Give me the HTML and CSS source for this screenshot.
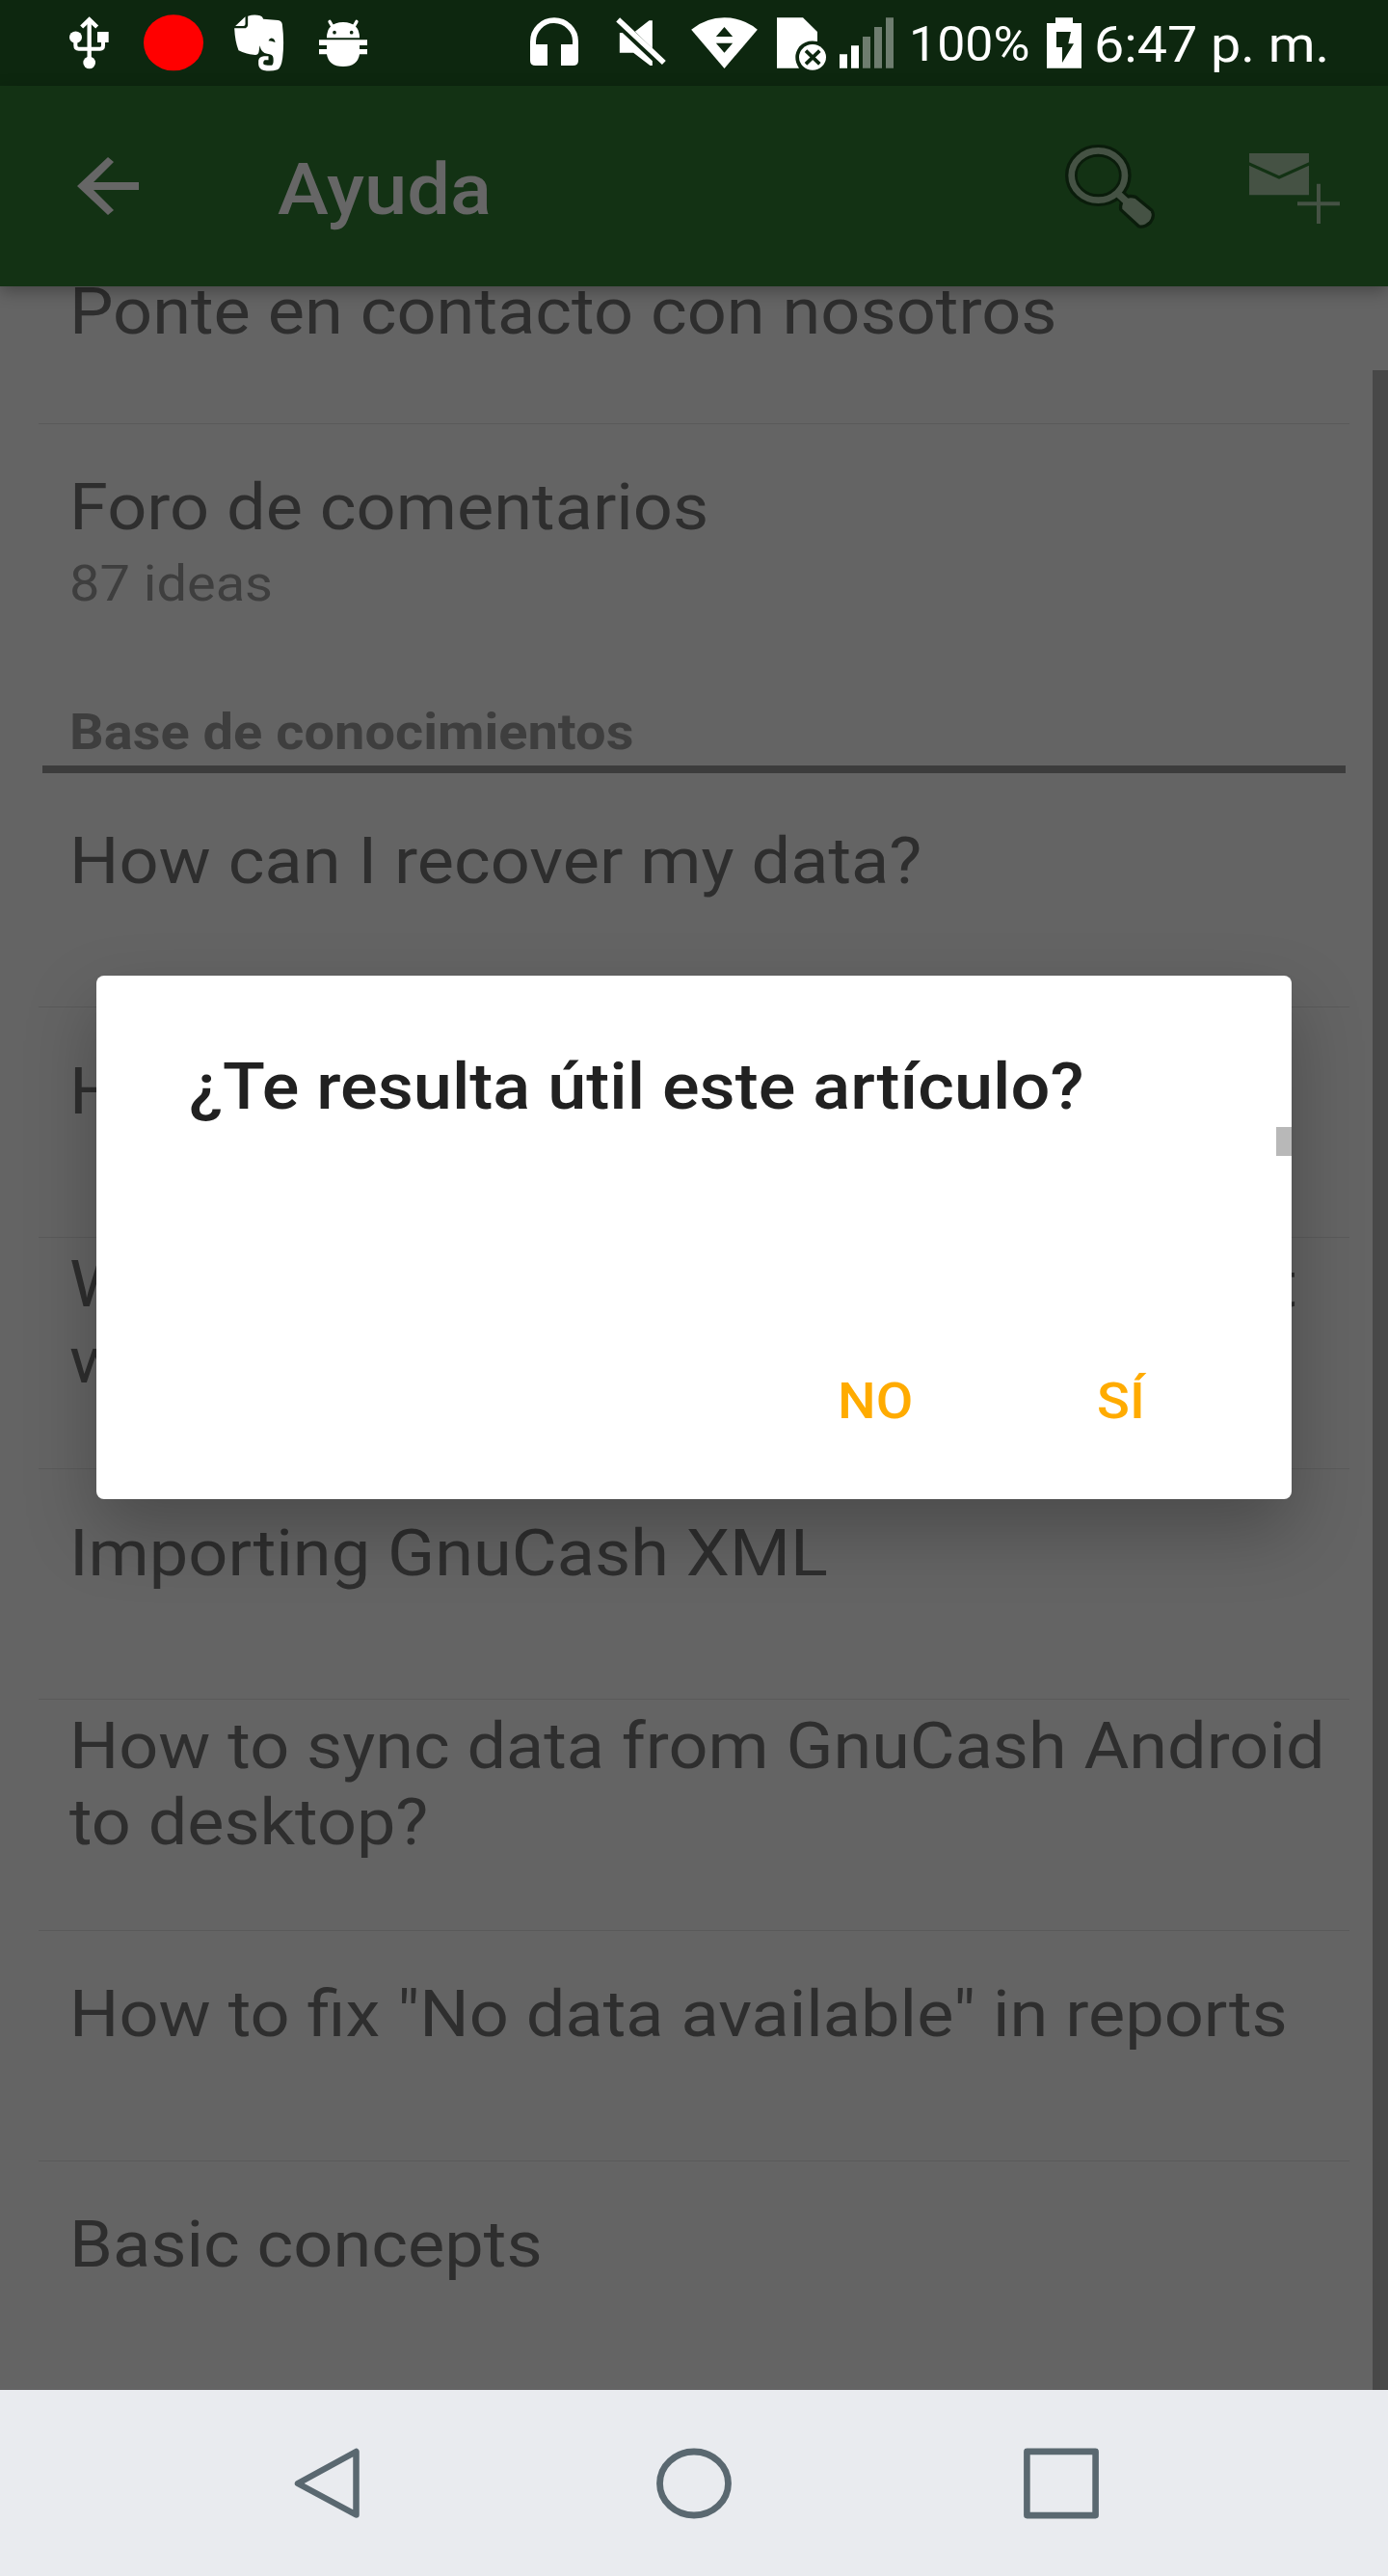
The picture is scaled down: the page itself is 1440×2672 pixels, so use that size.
FILE: index.html
```html
<!DOCTYPE html>
<html lang="es">
<head>
<meta charset="utf-8">
<title>Ayuda</title>
<link rel="stylesheet" href="styles.css">
</head>
<body>
<div class="phone">
  <header class="status">
    <svg class="usb" viewBox="96 0 123 267"><g fill="none" stroke="#fff"><path stroke-width="13" d="M158 65V190"/><path stroke-width="13" d="M134 84L158 61L182 84"/><path stroke-width="12" d="M115 120V142Q115 152 125 152H192Q201 152 201 142V122"/></g><g fill="#fff"><circle cx="158" cy="195" r="19"/><ellipse cx="115.500" cy="116" rx="19.500" ry="18.500"/><path d="M183 99H218V132H183Z"/></g></svg>
    <svg class="record" viewBox="327 0 186 267"><ellipse cx="420" cy="133" rx="93" ry="87" fill="#f00"/></svg>
    <svg class="note" viewBox="605 0 158 267"><path fill="#fff" d="M611 81L642 52V75Q642 81 636 81ZM608 88H638Q650 88 650 76V50Q670 44 688 49Q696 52 698 59L744 63Q756 65 757 76Q764 130 758 180Q754 211 742 217Q722 223 700 219Q684 215 683 200V188Q686 176 700 175H714V187H704Q698 188 698 198Q700 203 712 203H724Q731 200 729 180Q728 168 710 167Q692 166 687 142L684 162Q682 171 673 171Q640 167 621 157Q610 130 608 88Z"/><path fill="#0d270f" d="M714 127Q718 117 726 119Q734 121 735 132Q724 127 714 127Z"/></svg>
    <svg class="bug" viewBox="873 0 150 267"><path fill="#fff" d="M897 118Q897 70 948 69Q999 70 999 118ZM873 124H1023V141H999V153H1023V169H999Q993 207 948 207Q903 207 897 169H873V153H897V141H873Z"/><path stroke="#fff" stroke-width="10" stroke-linecap="round" d="M906 67L915 83M990 67L981 83"/><g fill="#0d270f"><circle cx="921" cy="101" r="5.500"/><circle cx="974" cy="101" r="5.500"/></g></svg>
    <svg class="phones" viewBox="90 0 150 267"><path fill="#fff" d="M90 130Q90 98 112 76.500T165 55T218 76.500T240 130V188Q240 204 223 204H186V138H222V128Q222 105 205.500 89T165 72T124.500 89T108 128V138H144V204H107Q90 204 90 188Z"/></svg>
    <svg class="mute" viewBox="358 0 155 267"><path fill="#fff" d="M369 102H378L471 190V204H464L412 164H369ZM417 98L461 64H471V151Z"/><path stroke="#fff" stroke-width="17" d="M364 61L507 195"/></svg>
    <svg class="wifi" viewBox="590 0 206 267"><path fill="#fff" d="M590 92Q636 55 693 55T796 92L693 213Z"/><path fill="#0d270f" d="M667 114L693 84L719 114ZM667 134H719L693 164Z"/></svg>
    <svg class="sim" viewBox="858 0 153 267"><path fill="#fff" d="M858 55H939L984 99V129Q950 122 928 145Q904 178 927 212H858Z"/><ellipse cx="969" cy="178" rx="42" ry="40" fill="#fff"/><path stroke="#0d270f" stroke-width="11" d="M948 158L991 199M991 158L948 199"/></svg>
    <svg class="signal" viewBox="1053 0 168 267"><path fill="#fff" d="M1053 169H1077V212H1053ZM1089 142H1113V212H1089Z"/><path fill="#6e7d6f" d="M1125 114H1149V212H1125ZM1161 84H1185V212H1161ZM1197 55H1221V212H1197Z"/></svg>
    <span class="percent wide">100%</span>
    <svg class="battery" viewBox="498 0 108 267"><path fill="#fff" fill-rule="evenodd" d="M525 55H579V72H606V212H498V72H525ZM528 99V147H546V195L582 136H565L573 99Z"/></svg>
    <span class="clock wide">6:47 p. m.</span>
  </header>

  <div class="appbar">
    <svg class="back" viewBox="80 160 64 66"><path fill="#666" d="M112 163L118 168L97 189H144V197H97L118 218L112 223L80 193Z"/></svg>
    <h1 class="title wide">Ayuda</h1>
    <svg class="search" viewBox="130 180 292 264"><g stroke="#0a1c0b" fill="none"><ellipse cx="239" cy="276" rx="84" ry="77" stroke-width="38"/><path stroke-width="36" d="M302 332L335 362"/><path stroke-width="20" stroke-linejoin="round" fill="#0a1c0b" d="M325 350Q336 342 354 348L402 388Q410 402 398 418Q383 433 368 430L314 380Q312 362 325 350Z"/></g><g fill="none" stroke="#455244"><ellipse cx="239" cy="276" rx="83" ry="77" stroke-width="20"/><path stroke-width="22" d="M302 334L332 362"/></g><path fill="#455244" d="M325 350Q336 342 354 348L402 388Q410 402 398 418Q383 433 368 430L314 380Q312 362 325 350Z"/></svg>
    <svg class="mail" viewBox="708 208 282 220"><g fill="#455244"><path d="M708 208H894V236L801 278L708 236ZM708 246L801 288L894 246V338H708Z"/><path d="M918 303H930V359H990V371H930V427H918V371H858V359H918Z"/></g></svg>
  </div>

  <main class="list">
    <div class="row contact"><p class="item wide">Ponte en contacto con nosotros</p></div>
    <div class="row forum">
      <p class="item wide">Foro de comentarios</p>
      <p class="count wide">87 ideas</p>
    </div>
    <h2 class="section"><span class="wide">Base de conocimientos</span></h2>
    <div class="row first"><p class="item wide">How can I recover my data?</p></div>
    <div class="row"><p class="item wide">H</p></div>
    <div class="row double"><p class="item wide split"><span>W</span><span>t</span></p><p class="item wide">w</p></div>
    <div class="row"><p class="item wide">Importing GnuCash XML</p></div>
    <div class="row double"><p class="item wide long">How to sync data from GnuCash Android<br>to desktop?</p></div>
    <div class="row reports"><p class="item wide">How to fix "No data available" in reports</p></div>
    <div class="row last"><p class="item wide">Basic concepts</p></div>
    <div class="scrollbar"></div>
  </main>

  <nav class="nav">
    <svg class="nav-back" viewBox="0 0 68 74"><path fill="none" stroke="#5a6870" stroke-width="6.500" stroke-linejoin="round" d="M64.500 4V69.500L4 37Z"/></svg>
    <svg class="nav-home" viewBox="0 0 78 74"><ellipse cx="39" cy="37" rx="35.500" ry="33" fill="none" stroke="#5a6870" stroke-width="6.800"/></svg>
    <svg class="nav-recent" viewBox="0 0 78 74"><rect x="3.400" y="3.900" width="71.200" height="66.200" fill="none" stroke="#5a6870" stroke-width="6.600" stroke-linejoin="round"/></svg>
  </nav>

  <section class="dialog">
    <h2 class="question wide">¿Te resulta útil este artículo?</h2>
    <div class="thumb"></div>
    <div class="actions"><span class="no wide">NO</span><span class="yes wide">SÍ</span></div>
  </section>
</div>
</body>
</html>
```
FILE: styles.css
```css
* { box-sizing: border-box; margin: 0; padding: 0; }
body { font-family: Roboto, sans-serif; background: #646464; }
svg { display: block; flex: none; }
.phone {
  position: relative;
  width: 1440px;
  height: 2672px;
  overflow: hidden;
  display: grid;
  grid-template-rows: 89px 208px 2182px 193px;
}
.wide { display: block; transform: scaleX(1.0765); transform-origin: 0 0; white-space: nowrap; }

.status { display: flex; background: #0d270f; color: #fff; padding-left: 72px; }
.status svg { height: 89px; }
.usb { width: 41px; }
.record { width: 62px; margin-left: 36px; }
.note { width: 53px; margin-left: 31px; }
.bug { width: 50px; margin-left: 36px; }
.phones { width: 50px; margin-left: 169px; }
.mute { width: 52px; margin-left: 39px; }
.wifi { width: 69px; margin-left: 26px; }
.sim { width: 51px; margin-left: 20px; }
.signal { width: 56px; margin-left: 14px; }
.percent { width: 119px; margin-left: 16px; font-size: 49.600px; line-height: 93px; transform: scaleX(1.045); }
.battery { width: 36px; margin-left: 24px; }
.clock { margin-left: 13px; font-size: 52px; line-height: 94px; transform: scaleX(1.07); }

.appbar {
  position: relative;
  z-index: 1;
  display: flex;
  align-items: flex-start;
  padding-left: 80px;
  background: #133214;
  box-shadow: 0 5px 16px rgba(0, 0, 0, .3);
}
.back { width: 64px; height: 66px; margin-top: 71px; }
.title { width: 817px; margin: 60px 0 0 144px; font-size: 74px; line-height: 95px; font-weight: 500; color: #666; }
.search { width: 97.300px; height: 88px; margin-top: 61px; margin-left: -2px; }
.mail { width: 94px; height: 73.300px; margin-top: 70px; margin-left: 96px; }

.list {
  position: relative;
  overflow: hidden;
  display: grid;
  grid-template-rows: 143px 260px 102px 243px 239px 240px 239px 240px 239px 237px;
  padding: 0 40px;
  color: #2e2e2e;
}
.item { font-size: 67px; line-height: 79px; }
.row { border-bottom: 1px solid #5a5a5a; padding: 48px 0 0 32px; }
.row.contact { padding-top: 0; }
.row.contact .item { line-height: 53px; }
.row.forum { border: 0; padding-top: 47px; }
.row.first { padding-top: 52px; }
.row.double { padding-top: 9px; }
.row.reports { padding-top: 47px; }
.row.last { border: 0; padding-top: 47px; }
.long { transform: scaleX(1.074); }
.split { display: flex; justify-content: space-between; width: 1183px; }
.count { margin-top: 9px; font-size: 52px; line-height: 61px; color: #3e3e3e; }
.section {
  margin: 0 4px;
  padding: 29px 0 0 28px;
  border-bottom: 8px solid #3c3c3c;
  font-size: 52px;
  line-height: 61px;
  font-weight: 700;
  color: #3e3e3e;
}
.scrollbar { position: absolute; right: 0; top: 87px; bottom: 0; width: 16px; background: #484848; }

.nav { display: flex; background: #e9ebef; padding: 59.500px 0 0 305px; }
.nav svg { height: 74px; }
.nav-back { width: 68px; }
.nav-home { width: 78px; margin-left: 308px; }
.nav-recent { width: 78px; margin-left: 303px; }

.dialog {
  position: absolute;
  left: 100px;
  top: 1012px;
  width: 1240px;
  height: 543px;
  z-index: 2;
  display: flex;
  flex-direction: column;
  background: #fff;
  border-radius: 8px;
  box-shadow: 0 32px 72px rgba(0, 0, 0, .25);
}
.question { margin: 76px 0 0 96px; font-size: 67px; line-height: 79px; font-weight: 500; color: #212121; }
.thumb { align-self: flex-end; width: 16px; height: 30px; margin-top: 2px; background: #b8b8b8; }
.actions { display: flex; margin-top: 224px; font-size: 52px; line-height: 61px; font-weight: 500; color: #ffab00; }
.no { width: 269px; margin-left: 769px; }
```
